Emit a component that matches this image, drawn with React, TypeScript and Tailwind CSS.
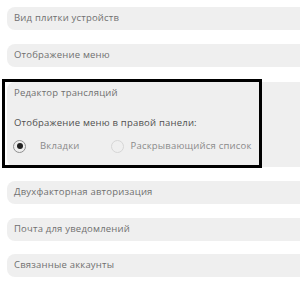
import React from "react";

const Row = ({ label }: { label: string }) => (
  <div className="h-[23px] bg-[#efefef] rounded-l-[8px] flex items-center pl-[7px] text-[9.5px] tracking-[0.2px] text-[#707070]">
    {label}
  </div>
);

export default function App() {
  return (
    <div
      className="relative w-[300px] h-[285px] bg-white overflow-hidden"
      style={{ fontFamily: '"Open Sans", "DejaVu Sans", sans-serif' }}
    >
      <div className="flex flex-col pl-[7px] pt-[7px]">
        <Row label="Вид плитки устройств" />
        <div className="h-[14px]" />
        <Row label="Отображение меню" />
        <div className="h-[15px]" />
        <div className="h-[85px] bg-[#efefef] rounded-l-[8px] flex flex-col pl-[7px] pt-[5px] text-[9.5px] tracking-[0.2px]">
          <div className="text-[#707070] leading-[12px]">Редактор трансляций</div>
          <div className="text-[#505050] leading-[12px] mt-[18px]">
            Отображение меню в правой панели:
          </div>
          <div className="flex items-center mt-[10px] text-[#8a8a8a]">
            <span className="w-[13px] h-[13px] rounded-full border-[1.5px] border-[#8f8f8f] flex items-center justify-center -ml-[1px]">
              <span className="w-[6px] h-[6px] rounded-full bg-[#222]" />
            </span>
            <span className="ml-[14px]">Вкладки</span>
            <span className="w-[13px] h-[13px] rounded-full border border-[#d6d6d6] ml-[31px]" />
            <span className="ml-[7px]">Раскрывающийся список</span>
          </div>
        </div>
        <div className="h-[14px]" />
        <Row label="Двухфакторная авторизация" />
        <div className="h-[14px]" />
        <Row label="Почта для уведомлений" />
        <div className="h-[13px]" />
        <Row label="Связанные аккаунты" />
      </div>
      <div className="absolute left-[2px] top-[79px] w-[260px] h-[89px] border-[3px] border-black" />
    </div>
  );
}
